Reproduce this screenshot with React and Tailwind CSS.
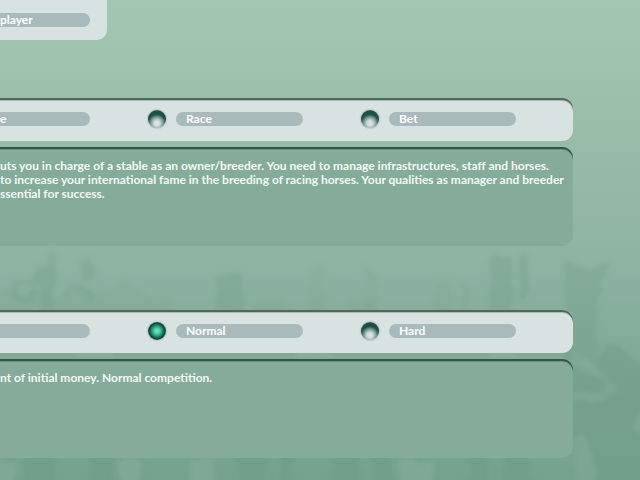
import { useState } from "react";

const modes = [
  { id: "mode-manage", label: "e" },
  { id: "mode-race", label: "Race" },
  { id: "mode-bet", label: "Bet" },
];

const levels = [
  { id: "level-easy", label: "" },
  { id: "level-normal", label: "Normal" },
  { id: "level-hard", label: "Hard" },
];

function Crowd() {
  return (
    <svg
      className="absolute inset-0 -z-10 h-full w-full"
      viewBox="0 0 640 480"
      preserveAspectRatio="xMidYMax slice"
      aria-hidden="true"
    >
      <defs>
        <filter id="haze" x="-5%" y="-5%" width="110%" height="110%">
          <feTurbulence
            type="fractalNoise"
            baseFrequency="0.05"
            numOctaves="3"
            seed="4"
            result="noise"
          />
          <feDisplacementMap in="SourceGraphic" in2="noise" scale="12" />
          <feGaussianBlur stdDeviation="2" />
        </filter>
        <linearGradient id="ground" x1="0" y1="0" x2="0" y2="1">
          <stop offset="0" stopColor="#6f9f88" stopOpacity="0" />
          <stop offset="1" stopColor="#6f9f88" stopOpacity="0.45" />
        </linearGradient>
      </defs>
      <rect x="0" y="270" width="640" height="210" fill="url(#ground)" />
      <g filter="url(#haze)" fill="#6d9c85">
        <g fillOpacity="0.3">
          <path d="M38 270l8-6 4-12h7l-3 16 5 8-6 8-1 34H40l2-28-6-10z" />
          <path d="M82 262l8-4 4 10-4 12-8 2z" />
          <path d="M494 258l16-4 3 20-2 50h-24l2-36z" />
          <path d="M518 254h10l2 44-10 2z" />
          <path d="M566 262l10 4 14 4 14-8 8 4-10 14-5 20v62h-32l1-70z" />
          <path d="M216 280q10-16 26-6l4 14-4 34h-24z" />
        </g>
        <g fillOpacity="0.16">
          <path d="M-6 296l14-10 16 10 14-4 22 8 20-12 24 8 20-14 24 14 22 4 10 28H-6z" />
          <path d="M310 266l10-4 4 16 2 48h-14zM366 268l10 8 2 50h-14zM436 282h14v42h-14zM462 286l10 2v38h-10z" />
          <path d="M252 308l22-8 20 8 4 18h-46zM346 304l16-4 18 8v18h-34z" />
        </g>
        <g fill="none" stroke="#6d9c85" strokeOpacity="0.3" strokeWidth="5">
          <path d="M16 296q-8-14 10-14 16 2 8 14-10 8-18 0" />
          <path d="M64 296q4-12 18-8 6 2 8 8" />
        </g>
        <g fillOpacity="0.5">
          <path d="M570 352l20 18 16-24 14 0 14 14 26 8v134h-90l4-52-6-12z" />
          <path d="M24 452h32v40H24zM92 452h20v40H92zM238 452h26v40h-26zM280 452h14v40h-14zM335 452h22v40h-22zM372 452l16 4 6 36h-22zM470 454h18v38h-18zM504 452l24 2 8 38h-36z" />
        </g>
        <g fill="#91b9a5" fillOpacity="0.3">
          <path d="M572 352l16 8 20 18-16-2-20-10zM572 392l36 2-4 6h-32zM574 440l10-6 10 22 2 40h-22zM608 380l8 4-6 12-6-4zM634 412l12-4v30l-12-6z" />
          <path d="M80 352h32v10H80zM296 352h38v10h-38zM488 352h30v10h-30z" />
          <path d="M-6 462h20v30H-6zM120 460h20v32h-20zM190 460h26v32h-26zM400 462h34v30h-34z" />
        </g>
      </g>
    </svg>
  );
}

function OptionRow({ name, title, options, value, onChange }) {
  return (
    <fieldset
      aria-label={title}
      className="flex h-[43px] items-center gap-14 rounded-r-[11px] bg-[#d7e2e1] pb-0.5 shadow-[inset_0_2px_#53665f,inset_0_3px_#a9b9b4]"
    >
      {options.map((option) => (
        <div key={option.id} className="group flex items-center gap-2">
          <input
            type="radio"
            id={option.id}
            name={name}
            checked={value === option.id}
            onChange={() => onChange(option.id)}
            className="mx-0.5 size-[18px] appearance-none rounded-full bg-[radial-gradient(circle_at_50%_74%,#e3ecea_0,#cbd8d5_3px,#7f9d97_6px,#1d4f45_9px,#1d4f45_12px,#4a746b_14px)] shadow-[0_0_2px_#6d8b85] group-first:sr-only checked:bg-[radial-gradient(circle_at_50%_50%,#7be8c4_0,#4cc9a4_3px,#168066_6px,#123f36_8px,#2d5a51_9px)]"
          />
          <label
            htmlFor={option.id}
            className="h-3.5 w-[127px] rounded-full bg-[#a8babb] pl-2.5 leading-[14px] text-white group-first:w-[90px] group-first:rounded-l-none group-first:pl-0"
          >
            {option.label}
          </label>
        </div>
      ))}
    </fieldset>
  );
}

function Description({ children }) {
  return (
    <div className="mt-1.5 h-[99px] rounded-r-[11px] bg-[#85ab99] pt-3 leading-[14px] text-[#f4faf6] shadow-[inset_0_2px_#335649,inset_0_3px_#6d9483]">
      {children}
    </div>
  );
}

export default function App() {
  const [mode, setMode] = useState("");
  const [level, setLevel] = useState("level-normal");

  return (
    <main className="relative isolate min-h-screen overflow-hidden bg-linear-to-b from-[#a2c8b2] via-[#8fb5a3] to-[#7aa592] pr-[67px] font-['Lato',sans-serif] text-[12px] font-bold">
      <Crowd />
      <header className="h-10 w-[107px] rounded-br-[10px] bg-[#d7e2e1] pt-[13px]">
        <p className="h-3.5 w-[90px] rounded-r-full bg-[#a8babb] leading-[14px] text-white">
          player
        </p>
      </header>

      <section className="mt-[58px]">
        <OptionRow
          name="mode"
          title="Game mode"
          options={modes}
          value={mode}
          onChange={setMode}
        />
        <Description>
          <p className="whitespace-nowrap">
            uts you in charge of a stable as an owner/breeder. You need to
            manage infrastructures, staff and horses.
            <br />
            to increase your international fame in the breeding of racing
            horses. Your qualities as manager and breeder
            <br />
            ssential for success.
          </p>
        </Description>
      </section>

      <section className="mt-16">
        <OptionRow
          name="level"
          title="Difficulty"
          options={levels}
          value={level}
          onChange={setLevel}
        />
        <Description>
          <p>nt of initial money. Normal competition.</p>
        </Description>
      </section>
    </main>
  );
}
